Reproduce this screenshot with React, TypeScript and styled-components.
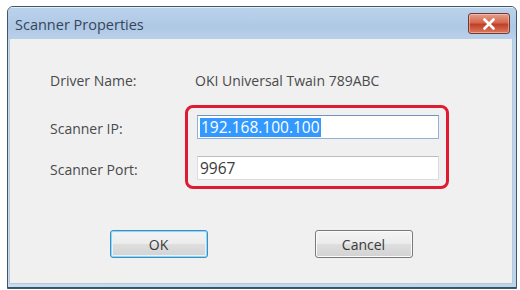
import styled, { createGlobalStyle } from "styled-components";

const GlobalStyle = createGlobalStyle`
  html, body {
    margin: 0;
    padding: 0;
    background: #ffffff;
  }
  body {
    font-family: "Open Sans", "Noto Sans", "DejaVu Sans", sans-serif;
  }
`;

export default function App() {
  return (
    <>
      <GlobalStyle />
      <Page>
        <Window>
          <TitleBar>
            <Title>Scanner Properties</Title>
            <CloseButton aria-label="Close">
              <svg width="14" height="12" viewBox="0 0 14 12">
                <path
                  d="M2.5 1.5 L11.5 10.5 M11.5 1.5 L2.5 10.5"
                  stroke="#ffffff"
                  strokeWidth="2.6"
                  strokeLinecap="round"
                />
              </svg>
            </CloseButton>
          </TitleBar>
          <Frame>
            <Client>
              <Row>
                <Label width={145}>Driver Name:</Label>
                <Value>OKI Universal Twain 789ABC</Value>
              </Row>
              <FieldGroup>
                <LabelColumn>
                  <Label width={135}>Scanner IP:</Label>
                  <Label width={135}>Scanner Port:</Label>
                </LabelColumn>
                <Highlight>
                  <Field focused>
                    <Selected>192.168.100.100</Selected>
                  </Field>
                  <Field>9967</Field>
                </Highlight>
              </FieldGroup>
              <Buttons>
                <Button primary>OK</Button>
                <Button>Cancel</Button>
              </Buttons>
            </Client>
          </Frame>
        </Window>
      </Page>
    </>
  );
}

const Page = styled.div`
  width: 520px;
  height: 290px;
  padding: 6px 0 0 7px;
  box-sizing: border-box;
`;

const Window = styled.div`
  width: 510px;
  height: 283px;
  box-sizing: border-box;
  border: 1px solid #3d5868;
  border-radius: 6px 6px 0 0;
  display: flex;
  flex-direction: column;
  overflow: hidden;
  background: #bdd4ec;
`;

const TitleBar = styled.div`
  height: 31px;
  flex-shrink: 0;
  display: flex;
  align-items: flex-start;
  justify-content: space-between;
  padding: 0 6px 0 7px;
  background: linear-gradient(#bcd2ea, #aec8e5 60%, #b9d0ea);
  border-top: 1px solid #e4eef8;
`;

const Title = styled.span`
  margin-top: 7px;
  font-size: 14.5px;
  color: #36445a;
`;

const CloseButton = styled.div`
  margin-top: 5px;
  width: 42px;
  height: 21px;
  box-sizing: border-box;
  border: 1px solid #6e3a35;
  border-radius: 3px;
  display: flex;
  align-items: center;
  justify-content: center;
  background: linear-gradient(#e6a08c, #d4684c 45%, #c0402a 55%, #dd7a5c);
  box-shadow: inset 0 0 0 1px rgba(255, 210, 195, 0.5);
`;

const Frame = styled.div`
  flex: 1;
  display: flex;
  padding: 0 3px 3px 1px;
  background: linear-gradient(90deg, #c9dcef, #bcd4ec);
  border-bottom: 1px solid #2f5566;
`;

const Client = styled.div`
  flex: 1;
  background: #f0f0f0;
  border: 1px solid #b7c8d8;
  border-top: none;
  padding: 32px 0 0 40px;
  display: flex;
  flex-direction: column;
  color: #4a4a4a;
  font-size: 14px;
`;

const Row = styled.div`
  display: flex;
  align-items: center;
  height: 18px;
`;

const Label = styled.span<{ width: number }>`
  width: ${(p) => p.width}px;
  flex-shrink: 0;
  white-space: nowrap;
`;

const Value = styled.span`
  white-space: nowrap;
`;

const FieldGroup = styled.div`
  display: flex;
  margin-top: 16px;
`;

const LabelColumn = styled.div`
  display: flex;
  flex-direction: column;
  padding-top: 14px;
  gap: 22px;
`;

const Highlight = styled.div`
  width: 264px;
  box-sizing: border-box;
  border: 3px solid #e01a32;
  border-radius: 8px;
  padding: 7px 7px 6px 9px;
  display: flex;
  flex-direction: column;
  gap: 17px;
`;

const Field = styled.div<{ focused?: boolean }>`
  height: 24px;
  box-sizing: border-box;
  background: #ffffff;
  border: 1px solid ${(p) => (p.focused ? "#8fb2d6" : "#d9dde2")};
  border-top-color: ${(p) => (p.focused ? "#6f93bd" : "#b9bec5")};
  display: flex;
  align-items: center;
  padding-left: 2px;
  color: #3a3a3a;
  font-size: 15.5px;
`;

const Selected = styled.span`
  background: #3399ff;
  color: #ffffff;
  padding: 0 1px;
  line-height: 19px;
`;

const Buttons = styled.div`
  display: flex;
  justify-content: center;
  gap: 107px;
  margin-top: 41px;
  padding-right: 40px;
`;

const Button = styled.div<{ primary?: boolean }>`
  width: 98px;
  height: 28px;
  box-sizing: border-box;
  border: 1px solid ${(p) => (p.primary ? "#3c8fc4" : "#7a7a7a")};
  border-radius: 3px;
  display: flex;
  align-items: center;
  justify-content: center;
  color: #3a3a3a;
  background: linear-gradient(#f4f4f4, #ececec 48%, #dedede 52%, #d2d2d2);
  box-shadow: ${(p) =>
    p.primary
      ? "inset 0 0 0 1px #92d6f3, inset 0 0 0 2px #e4f4fc"
      : "inset 0 0 0 1px #fbfbfb"};
`;
